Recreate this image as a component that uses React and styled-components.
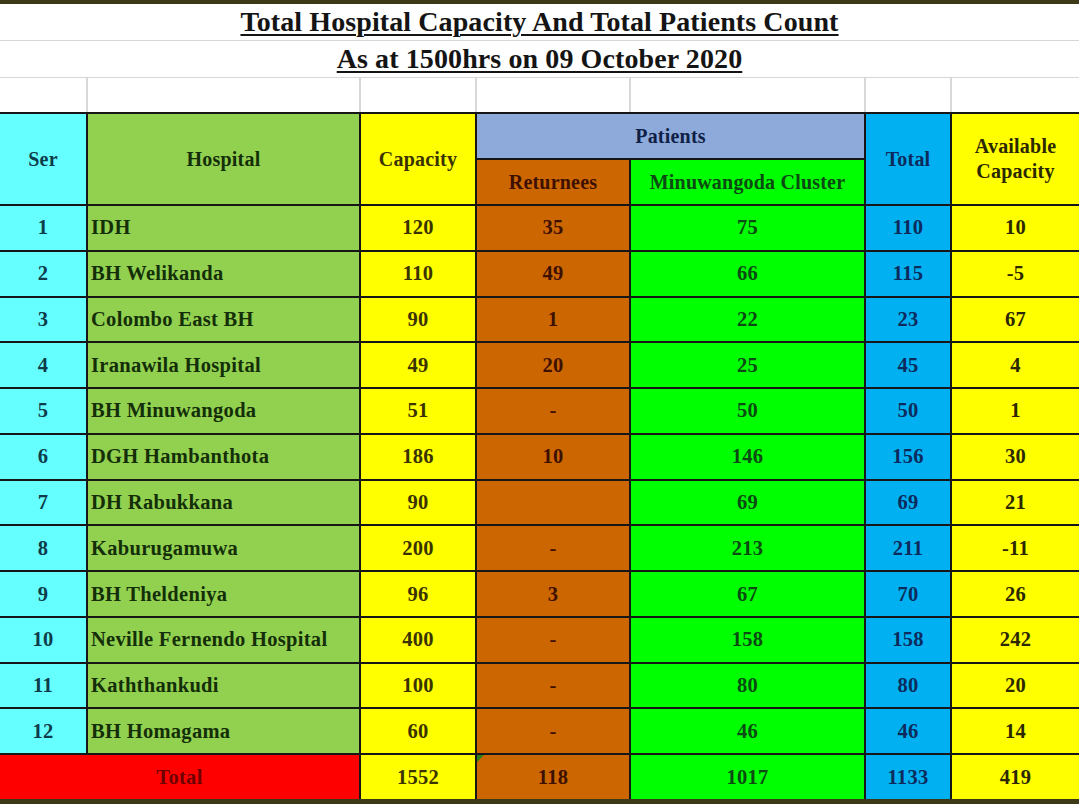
import React from "react";
import styled, { createGlobalStyle } from "styled-components";

const GlobalStyle = createGlobalStyle`
  html, body {
    margin: 0;
    padding: 0;
    background: #3b3916;
  }
  body {
    font-family: "Liberation Serif", "Times New Roman", serif;
  }
`;

const TONES = {
  ser: { bg: "#66ffff", fg: "#0d3c4a" },
  hospital: { bg: "#92d050", fg: "#142f08" },
  capacity: { bg: "#ffff00", fg: "#3a3300" },
  patients: { bg: "#8eaadb", fg: "#101f46" },
  returnees: { bg: "#cc6600", fg: "#3e1000" },
  cluster: { bg: "#00ff00", fg: "#0b4a12" },
  total: { bg: "#00b0f0", fg: "#0c2b5c" },
  available: { bg: "#ffff00", fg: "#2b2800" },
  red: { bg: "#ff0000", fg: "#6e0000" },
};

const COLUMNS = "86px 271px 114px 152px 233px 84px 127px";

const Page = styled.div`
  height: 804px;
  display: flex;
  flex-direction: column;
  overflow: hidden;
`;

const Bar = styled.div`
  height: ${(p) => p.$h}px;
  background: #3b3916;
  flex-shrink: 0;
`;

const TitleRow = styled.div`
  height: 36px;
  background: #fff;
  border-bottom: 1px solid #d6d6d6;
  display: flex;
  justify-content: center;
  align-items: flex-end;
  flex-shrink: 0;
`;

const Title = styled.h1`
  margin: 0 0 2px;
  font-size: 28px;
  line-height: 32px;
  font-weight: bold;
  letter-spacing: 0.1px;
  color: #141414;
  text-decoration: underline;
  text-decoration-thickness: 2px;
  text-underline-offset: 3px;
`;

const SpacerRow = styled.div`
  height: 34px;
  display: grid;
  grid-template-columns: ${COLUMNS};
  column-gap: 2px;
  background: #d8d8d8;
  flex-shrink: 0;
`;

const SpacerCell = styled.div`
  background: #fff;
`;

const Table = styled.div`
  flex: 1;
  display: grid;
  grid-template-columns: ${COLUMNS};
  grid-template-rows: 44px 44px repeat(13, 1fr);
  gap: 2px;
  background: #161616;
  border-top: 2px solid #161616;
`;

const Cell = styled.div`
  position: relative;
  display: flex;
  align-items: center;
  justify-content: ${(p) => (p.$left ? "flex-start" : "center")};
  padding-left: ${(p) => (p.$left ? "3px" : "0")};
  text-align: center;
  background: ${(p) => TONES[p.$tone].bg};
  color: ${(p) => TONES[p.$tone].fg};
  font-size: 20.5px;
  letter-spacing: 0.3px;
  line-height: 25px;
  font-weight: bold;
  grid-row: ${(p) => (p.$rows ? `span ${p.$rows}` : "auto")};
  grid-column: ${(p) => (p.$cols ? `span ${p.$cols}` : "auto")};
  white-space: nowrap;

  &::before {
    content: "";
    display: ${(p) => (p.$flag ? "block" : "none")};
    position: absolute;
    top: 0;
    left: 0;
    border-top: 7px solid #2f7d18;
    border-right: 7px solid transparent;
  }
`;

const HeadCell = styled(Cell)`
  font-size: 20px;
  letter-spacing: 0.2px;
`;

const rows = [
  ["1", "IDH", "120", "35", "75", "110", "10"],
  ["2", "BH Welikanda", "110", "49", "66", "115", "-5"],
  ["3", "Colombo East BH", "90", "1", "22", "23", "67"],
  ["4", "Iranawila Hospital", "49", "20", "25", "45", "4"],
  ["5", "BH Minuwangoda", "51", "-", "50", "50", "1"],
  ["6", "DGH Hambanthota", "186", "10", "146", "156", "30"],
  ["7", "DH Rabukkana", "90", "", "69", "69", "21"],
  ["8", "Kaburugamuwa", "200", "-", "213", "211", "-11"],
  ["9", "BH Theldeniya", "96", "3", "67", "70", "26"],
  ["10", "Neville Fernendo Hospital", "400", "-", "158", "158", "242"],
  ["11", "Kaththankudi", "100", "-", "80", "80", "20"],
  ["12", "BH Homagama", "60", "-", "46", "46", "14"],
];

const tones = ["ser", "hospital", "capacity", "returnees", "cluster", "total", "available"];

function App() {
  return (
    <Page>
      <GlobalStyle />
      <Bar $h={4} />
      <TitleRow>
        <Title>Total Hospital Capacity And Total Patients Count</Title>
      </TitleRow>
      <TitleRow>
        <Title>As at 1500hrs on 09 October 2020</Title>
      </TitleRow>
      <SpacerRow>
        {tones.map((t) => (
          <SpacerCell key={t} />
        ))}
      </SpacerRow>
      <Table>
        <HeadCell $tone="ser" $rows={2}>Ser</HeadCell>
        <HeadCell $tone="hospital" $rows={2}>Hospital</HeadCell>
        <HeadCell $tone="capacity" $rows={2}>Capacity</HeadCell>
        <HeadCell $tone="patients" $cols={2}>Patients</HeadCell>
        <HeadCell $tone="total" $rows={2}>Total</HeadCell>
        <HeadCell $tone="available" $rows={2}>
          Available
          <br />
          Capacity
        </HeadCell>
        <HeadCell $tone="returnees">Returnees</HeadCell>
        <HeadCell $tone="cluster">Minuwangoda Cluster</HeadCell>

        {rows.map((row) =>
          row.map((value, i) => (
            <Cell key={row[0] + "-" + i} $tone={tones[i]} $left={i === 1}>
              {value}
            </Cell>
          ))
        )}

        <Cell $tone="red" $cols={2}>Total</Cell>
        <Cell $tone="capacity">1552</Cell>
        <Cell $tone="returnees" $flag>118</Cell>
        <Cell $tone="cluster">1017</Cell>
        <Cell $tone="total">1133</Cell>
        <Cell $tone="available">419</Cell>
      </Table>
      <Bar $h={5} />
    </Page>
  );
}

export default App;
